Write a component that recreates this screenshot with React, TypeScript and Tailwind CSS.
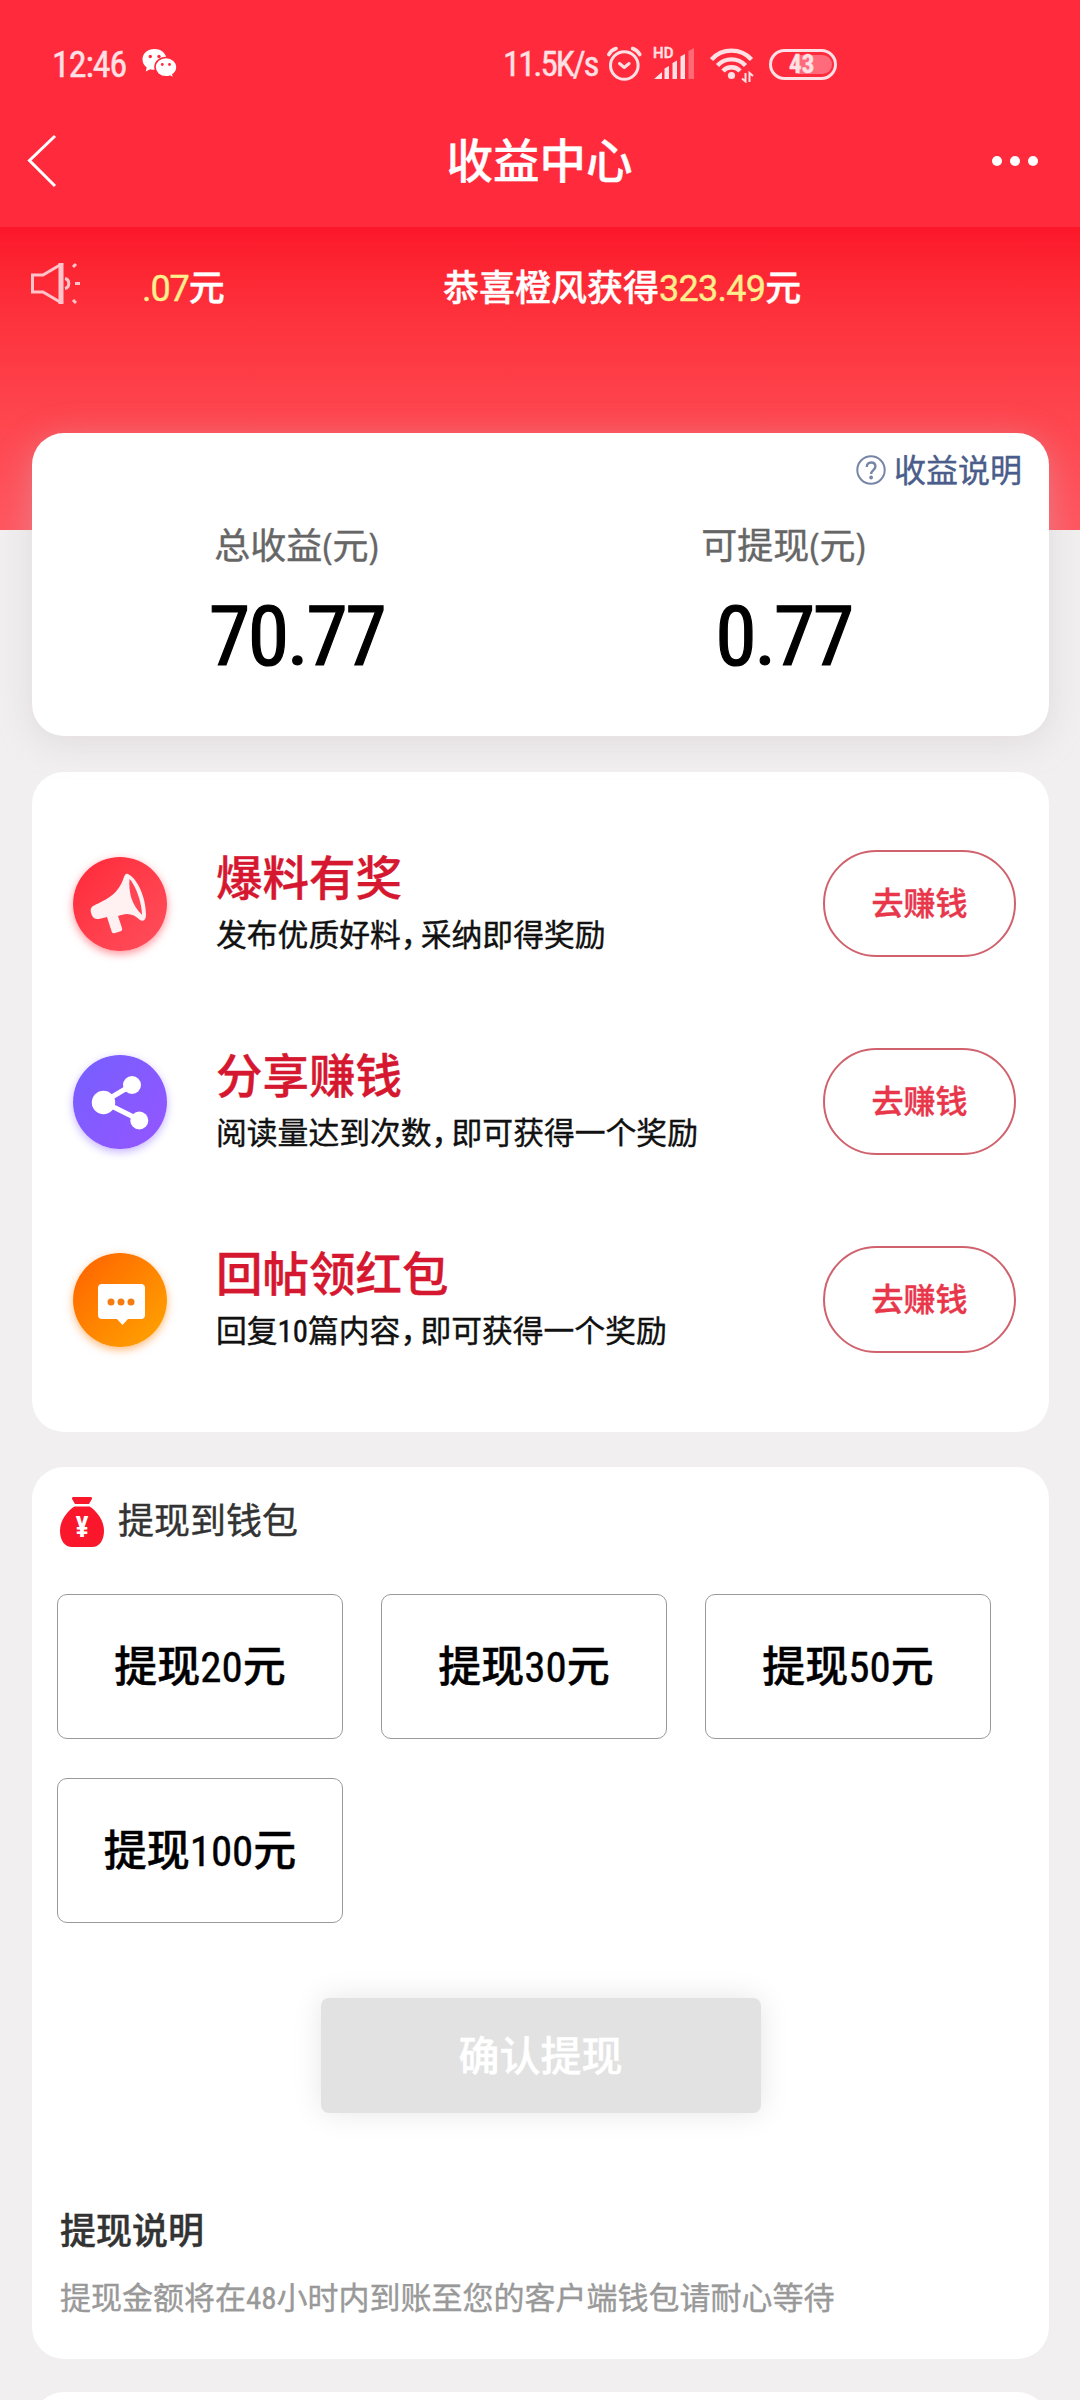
import { ReactNode } from "react";

const withdrawOptions = [20, 30, 50, 100];

// condensed digits set inside Chinese text
function Num({ children }: { children: ReactNode }) {
  return <span className="font-['Roboto'] leading-none font-normal [font-stretch:75%]">{children}</span>;
}

function StatusIcons() {
  return (
    <div className="flex items-center text-[#ffe0e4]">
      {/* alarm */}
      <svg className="ml-[6px] h-[38px] w-[38px]" viewBox="0 0 38 38" fill="none" stroke="currentColor" strokeWidth="3" strokeLinecap="round" strokeLinejoin="round">
        <circle cx="19.3" cy="20.500" r="13.800" />
        <path d="M14.500 18.500l4.800 4 4.800-4" />
        <path d="M3.800 9.500C5.500 6.500 8 4.500 11 3.500M27.600 3.500c3 1 5.500 3 7.200 6" strokeWidth="3.600" />
      </svg>

      {/* signal */}
      <div className="relative ml-[10px] h-[32px] w-[42px]">
        <span className="absolute top-[-2px] left-[0px] font-['Roboto'] text-[15px] leading-[14px] font-medium [font-stretch:100%]">HD</span>
        <svg className="h-[32px] w-[42px]" viewBox="0 0 42 32" fill="currentColor">
          <path d="M1 31l8-7v7zM11.500 20.500l4.500-2.500v13h-4.500zM19.500 15l4.500-2.500V31h-4.500zM27.500 8.500L32 6v25h-4.500z" />
          <path d="M35.500 3L41 0v31h-5.500z" opacity=".35" />
        </svg>
      </div>

      {/* wifi */}
      <svg className="ml-[15px] h-[38px] w-[46px]" viewBox="0 0 46 38" fill="none" stroke="currentColor" strokeWidth="4.400">
        <path d="M1.500 14.500a27 27 0 0 1 40 0M7.500 20.500a19 19 0 0 1 28 0M13 26a11.500 11.500 0 0 1 17 0" />
        <circle cx="21.500" cy="30.500" r="3.600" fill="currentColor" stroke="none" />
        <path d="M35.500 28v8.500l-3.500-3M39.500 37v-9l3.500 3" strokeWidth="2" />
      </svg>

      {/* battery */}
      <div className="relative ml-[13px] flex h-[31px] w-[68px] items-center rounded-full border-[3px] border-[#ffe0e4] pl-[17px]">
        <span className="absolute right-[2px] h-[19px] w-[34px] rounded-r-full bg-[#ff6b7b]" />
        <span className="relative font-['Roboto'] text-[25px] leading-none font-bold">43</span>
      </div>
    </div>
  );
}

function StatusBar() {
  return (
    <div className="flex h-[96px] items-center pt-[32px] pl-[52px] text-[#ffe0e4]">
      <span className="w-[76px] pt-[2px] font-['Roboto'] text-[36px] leading-none tracking-[-0.03em] whitespace-nowrap">12:46</span>
      <svg className="ml-[14px] h-[30px] w-[36px]" viewBox="0 0 36 30">
        <path d="M12.500 0C5.500 0 .500 4.500.500 10.500c0 3.300 1.600 6 4.200 8L3.700 22.500l4.500-2.300c1.400.4 2.800.6 4.300.6 7 0 12-4.500 12-10.300S19.500 0 12.500 0z" fill="#fff" />
        <path d="M24 8.500c-6.300 0-11 4.200-11 9.600s4.700 9.700 11 9.700c1.400 0 2.700-.2 3.900-.6l4 2.200-1-3.700c2.600-1.800 4.100-4.500 4.100-7.600 0-5.400-4.700-9.600-11-9.600z" fill="#fff" stroke="#ff2b3d" strokeWidth="1.600" />
        <g fill="#ff2b3d">
          <circle cx="8.300" cy="7.500" r="1.700" />
          <circle cx="17" cy="7.500" r="1.700" />
          <circle cx="20.300" cy="15.500" r="1.400" />
          <circle cx="27.500" cy="15.500" r="1.400" />
        </g>
      </svg>
      <span className="ml-[325px] w-[96px] pt-[1px] font-['Roboto'] text-[35px] leading-none tracking-[-0.06em] whitespace-nowrap">11.5K/s</span>
      <StatusIcons />
    </div>
  );
}

function NavBar() {
  return (
    <div className="flex h-[131px] items-center justify-between pr-[42px] pb-[2px] pl-[27px] text-white">
      <svg className="h-[54px] w-[51px]" viewBox="0 0 51 54" fill="none" stroke="currentColor" strokeWidth="3">
        <path d="M28 2L2.500 26.500 28 52" />
      </svg>
      <h1 className="ml-[9px] text-[46.500px] leading-none font-medium">收益中心</h1>
      <div className="flex gap-[8px]">
        <span className="size-[10px] rounded-full bg-white" />
        <span className="size-[10px] rounded-full bg-white" />
        <span className="size-[10px] rounded-full bg-white" />
      </div>
    </div>
  );
}

function Marquee() {
  return (
    <div className="flex h-[122px] items-center pl-[30px] text-[36px] text-white">
      <svg className="mb-[8px] h-[44px] w-[52px] shrink-0" viewBox="0 0 52 44" fill="none" stroke="#ffc4ca" strokeWidth="3">
        <path d="M30 3L13 13H2.500v17H13l17 10" />
        <path d="M31 1v41" strokeWidth="5" />
        <path d="M35 16.500c5 1 5 9 0 10M45 21.500h5M43 5l3-3M43 38l3 3" />
      </svg>
      <div className="ml-[60px] flex flex-1 overflow-hidden leading-[50px] font-medium whitespace-nowrap">
        <span className="w-[301px]">
          <span className="font-['Roboto'] leading-none font-normal tracking-[-0.03em] text-[#ffee8c] [font-stretch:100%]">.07</span>元
        </span>
        <span>
          恭喜橙风获得
          <span className="font-['Roboto'] leading-none font-normal tracking-[-0.02em] text-[#ffee8c] [font-stretch:100%]">323.49</span>元
        </span>
      </div>
    </div>
  );
}

function Stat({ label, value }: { label: string; value: string }) {
  return (
    <div className="w-[487px] text-center">
      <p className="text-[36px] leading-[50px] text-[#666]">{label}</p>
      <p className="mt-[16px] font-['Roboto'] text-[84px] leading-[100px] tracking-[-0.03em] text-black [-webkit-text-stroke:1.2px]">
        {value}
      </p>
    </div>
  );
}

function MegaphoneIcon() {
  return (
    <svg className="size-[94px]" viewBox="0 0 94 94">
      <path d="M55 17c9 4 18 23 18 41 0 5-3 7-6 5-4-4-8-6-13-6-3 0-6 1-9 2l4 12c.5 2 0 3-2 3.500l-5 1.500c-2 .500-3 0-3.500-2L34 60l-6 1.500c-4 1-7 1-9-3-2-5-2-8 2-10C34 42 45 38 51 20c.8-2.500 2-4 4-3z" fill="#fff1f1" />
      <path d="M56.500 22c5 5 12 21 12.500 36-5-5-9-11-11-18-1.500-6-2-12-1.500-18z" fill="#ff4453" />
    </svg>
  );
}

function ShareIcon() {
  return (
    <svg className="size-[94px]" viewBox="0 0 94 94" fill="#fff">
      <path d="M59 30L30.500 47l36 18" fill="none" stroke="#fff" strokeWidth="5" />
      <circle cx="30.500" cy="47.500" r="11.700" />
      <circle cx="59" cy="30" r="9" />
      <circle cx="66.300" cy="65.500" r="9" />
    </svg>
  );
}

function ChatIcon() {
  return (
    <svg className="size-[94px]" viewBox="0 0 94 94" fill="#fff">
      <path d="M29 31h39a4 4 0 0 1 4 4v27a4 4 0 0 1-4 4H55l-5.500 6-5.500-6H29a4 4 0 0 1-4-4V35a4 4 0 0 1 4-4z" />
      <g fill="#f57c10">
        <circle cx="38" cy="49" r="3.500" />
        <circle cx="48" cy="49" r="3.500" />
        <circle cx="58" cy="49" r="3.500" />
      </g>
    </svg>
  );
}

type TaskProps = {
  icon: ReactNode;
  iconBg: string;
  title: string;
  // two clauses, joined by a half width comma
  desc: [ReactNode, string];
};

function Task({ icon, iconBg, title, desc }: TaskProps) {
  return (
    <div className="flex h-[198px] items-center pr-[33px] pl-[41px]">
      <div className={`size-[94px] shrink-0 rounded-full ${iconBg}`}>{icon}</div>
      <div className="ml-[49px] flex-1 whitespace-nowrap">
        <p className="text-[46.500px] leading-[60px] font-medium text-[#d5172f]">{title}</p>
        <p className="flex text-[30.800px] leading-[54px] text-[#111]">
          <span>{desc[0]}</span>
          <span className="w-[20px] [font-feature-settings:'halt']">{"\uFF0C"}</span>
          <span>{desc[1]}</span>
        </p>
      </div>
      <button className="-mt-[2px] h-[107px] w-[193px] rounded-full border-2 border-[#d0626d] text-[32px] font-medium text-[#e8364a]">
        去赚钱
      </button>
    </div>
  );
}

function MoneyBagIcon() {
  return (
    <svg className="mt-[2px] h-[52px] w-[46px]" viewBox="0 0 46 52" fill="#fb172b">
      <path d="M14.500 1h17c1.500 0 2 1 1.300 2.200L30 8H16l-2.800-4.800C12.500 2 13 1 14.500 1z" />
      <path d="M15.500 10.500h15C38 15 45 25 45 34.500 45 45 40 51 33 51H13C6 51 1 45 1 34.500 1 25 8 15 15.500 10.500z" />
      <text x="23" y="41" textAnchor="middle" fontSize="28" fontWeight="700" fill="#fff">¥</text>
    </svg>
  );
}

export default function App() {
  return (
    <div className="h-[2400px] w-[1080px] overflow-hidden bg-[#f1eff0] font-['Open_Sans','Noto_Sans_CJK_SC',sans-serif] [font-stretch:75%] [-webkit-text-stroke:0.4px]">
      <header className="bg-[#ff2b3d]">
        <StatusBar />
        <NavBar />
      </header>

      <div className="h-[303px] bg-linear-to-b from-[#fc1629] to-[#ff5660]">
        <Marquee />
      </div>

      <main className="pr-[31px] pl-[32px]">
        {/* balance */}
        <section className="relative -mt-[97px] h-[303px] rounded-[32px] bg-white px-[21px] shadow-[0_6px_34px_rgba(200,190,195,0.4)]">
          <div className="flex h-[74px] items-center justify-end pr-[6px] text-[32px] text-[#4b5d8a]">
            <svg className="mr-[8px] size-[30px]" viewBox="0 0 30 30" fill="none" stroke="#7785a6" strokeWidth="2">
              <circle cx="15" cy="15" r="13.700" />
              <path d="M10.800 12c0-2.800 1.800-4.500 4.300-4.500s4.300 1.600 4.300 4c0 3.500-4.300 3.700-4.300 7.500" strokeWidth="2.400" />
              <circle cx="15.100" cy="22.500" r=".9" fill="#7785a6" />
            </svg>
            收益说明
          </div>
          <div className="mt-[14px] flex">
            <Stat label="总收益(元)" value="70.77" />
            <Stat label="可提现(元)" value="0.77" />
          </div>
        </section>

        {/* tasks */}
        <section className="mt-[36px] h-[660px] rounded-[32px] bg-white py-[33px]">
          <Task
            icon={<MegaphoneIcon />}
            iconBg="bg-linear-to-br from-[#ff2638] to-[#ff4e5c] shadow-[0_3px_9px_rgba(255,60,75,0.55)]"
            title="爆料有奖"
            desc={["发布优质好料", "采纳即得奖励"]}
          />
          <Task
            icon={<ShareIcon />}
            iconBg="bg-linear-to-br from-[#755fff] to-[#9455ff] shadow-[0_3px_9px_rgba(130,90,255,0.45)]"
            title="分享赚钱"
            desc={["阅读量达到次数", "即可获得一个奖励"]}
          />
          <Task
            icon={<ChatIcon />}
            iconBg="bg-linear-to-br from-[#ff5f00] to-[#ffa500] shadow-[0_3px_9px_rgba(255,120,0,0.5)]"
            title="回帖领红包"
            desc={[<>回复<Num>10</Num>篇内容</>, "即可获得一个奖励"]}
          />
        </section>

        {/* withdraw */}
        <section className="mt-[35px] h-[892px] rounded-[32px] bg-white">
          <div className="flex h-[108px] items-center pl-[27px] text-[36px] text-[#333]">
            <MoneyBagIcon />
            <span className="ml-[13px]">提现到钱包</span>
          </div>
          <div className="mt-[19px] grid grid-cols-[286px_286px_286px] gap-x-[38px] gap-y-[39px] pl-[25px]">
            {withdrawOptions.map((amount) => (
              <button key={amount} className="h-[145px] rounded-[10px] border border-[#999] text-[43px] font-medium text-black">
                提现<Num>{amount}</Num>元
              </button>
            ))}
          </div>
          <button className="mx-auto mt-[75px] block h-[115px] w-[440px] rounded-[8px] bg-[#e2e2e2] text-[41px] font-medium text-white shadow-[0_0_30px_rgba(0,0,0,0.1)]">
            确认提现
          </button>
          <div className="mt-[93px] pl-[28px]">
            <h2 className="text-[36px] leading-[50px] font-medium text-[#333]">提现说明</h2>
            <p className="mt-[21px] text-[31px] leading-[40px] text-[#999]">
              提现金额将在<Num>48</Num>小时内到账至您的客户端钱包请耐心等待
            </p>
          </div>
        </section>

        <section className="mt-[33px] h-[200px] rounded-[32px] bg-white" />
      </main>
    </div>
  );
}
